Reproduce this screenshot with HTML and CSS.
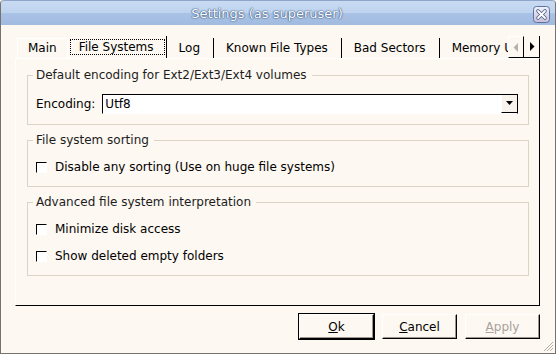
FILE: index.html
```html
<!DOCTYPE html>
<html lang="en">
<head>
    <meta charset="UTF-8">
    <title>Settings (as superuser)</title>
    <link rel="stylesheet" href="styles.css">
</head>
<body>
    <div class="window">
        <div class="titlebar">
            <span class="title">Settings (as superuser)</span>
            <span class="close">
                <svg width="17" height="17" viewBox="0 0 17 17">
                    <defs>
                        <linearGradient id="cg" x1="0" y1="0" x2="0" y2="1">
                            <stop offset="0" stop-color="#eef2fa"/>
                            <stop offset="1" stop-color="#c9bdd9"/>
                        </linearGradient>
                    </defs>
                    <rect x="0.5" y="0.5" width="16" height="16" rx="3" fill="url(#cg)" stroke="#5d74a0"/>
                    <path d="M5 5 L12 12 M12 5 L5 12" stroke="#52688f" stroke-width="3.6" stroke-linecap="round"/>
                    <path d="M5 5 L12 12 M12 5 L5 12" stroke="#ffffff" stroke-width="1.8" stroke-linecap="round"/>
                </svg>
            </span>
        </div>

        <div class="content">
            <!-- onglets -->
            <div class="tabbar">
                <div class="tabs">
                    <div class="tab tab-first">Main</div>
                    <div class="tab tab-current"><span class="focus">File Systems</span></div>
                    <div class="tab">Log</div>
                    <div class="tab">Known File Types</div>
                    <div class="tab">Bad Sectors</div>
                    <div class="tab">Memory Usage</div>
                </div>
                <div class="scroller">
                    <span class="scroll-btn">
                        <svg width="6" height="9" viewBox="0 0 6 9"><path d="M5 0 L5 9 L0.5 4.5 Z" fill="#b7b2ab"/></svg>
                    </span>
                    <span class="scroll-btn">
                        <svg width="6" height="9" viewBox="0 0 6 9"><path d="M1 0 L1 9 L5.5 4.5 Z" fill="#000"/></svg>
                    </span>
                </div>
            </div>

            <div class="panel">
                <fieldset class="group group-encoding">
                    <legend>Default encoding for Ext2/Ext3/Ext4 volumes</legend>
                    <div class="row">
                        <label class="field-label">Encoding:</label>
                        <div class="combo">
                            <span class="combo-text">Utf8</span>
                            <span class="combo-btn">
                                <svg width="7" height="5" viewBox="0 0 7 5"><path d="M0 0 L7 0 L3.5 4 Z" fill="#000"/></svg>
                            </span>
                        </div>
                    </div>
                </fieldset>

                <fieldset class="group">
                    <legend>File system sorting</legend>
                    <div class="row">
                        <span class="check"></span>
                        <span>Disable any sorting (Use on huge file systems)</span>
                    </div>
                </fieldset>

                <fieldset class="group">
                    <legend>Advanced file system interpretation</legend>
                    <div class="row">
                        <span class="check"></span>
                        <span>Minimize disk access</span>
                    </div>
                    <div class="row">
                        <span class="check"></span>
                        <span>Show deleted empty folders</span>
                    </div>
                </fieldset>
            </div>

            <div class="buttons">
                <button class="btn btn-default"><u>O</u>k</button>
                <button class="btn"><u>C</u>ancel</button>
                <button class="btn btn-disabled"><u>A</u>pply</button>
            </div>
        </div>

        <svg class="grip" width="12" height="12" viewBox="0 0 12 12">
            <path d="M11 2 L2 11 M11 5 L5 11 M11 8 L8 11" stroke="#b3aea7" stroke-width="1"/>
        </svg>
    </div>
</body>
</html>
```

FILE: styles.css
```css
body {
    margin: 0;
    font-family: "DejaVu Sans", sans-serif;
    font-size: 12px;
    color: #000;
    background: #fdf8f2;
}
.window {
    position: relative;
    width: 556px;
    height: 354px;
    box-sizing: border-box;
    border: 1px solid #77726c;
    border-top: none;
    border-radius: 4px 4px 0 0;
    background: #fdf8f2;
    overflow: hidden;
}
.titlebar {
    display: flex;
    align-items: center;
    height: 24px;
    margin: 0 -1px;
    border: 1px solid #8ea6c9;
    border-bottom: none;
    border-radius: 4px 4px 0 0;
    background: linear-gradient(#c9dbf2 0, #bed3ef 50%, #a9c2e5 50%, #a1bbe0 100%);
}
.title {
    flex: 1;
    text-align: center;
    font-size: 13px;
    color: #ffffff;
    text-shadow: 0 0 1px #2f4d7a, 0 0 1px #2f4d7a, 0 0 2px #5a7aa8;
}
.close {
    display: flex;
    margin-right: 5px;
    margin-top: 2px;
}
.content {
    padding: 11px 15px 0 14px;
}

/* onglets */
.tabbar {
    display: flex;
    height: 22px;
}
.tabs {
    flex: 1;
    display: flex;
    align-items: flex-end;
    overflow: hidden;
    white-space: nowrap;
}
.tab {
    height: 20px;
    line-height: 20px;
    padding: 0 13px 0 12px;
    border-right: 1px solid #000;
    box-sizing: border-box;
}
.tab:last-child {
    border-right: none;
    padding-right: 0;
}
.tab-first {
    margin-left: 2px;
    padding: 0 10px;
    border: 1px solid #fff;
    border-bottom: none;
    line-height: 19px;
}
.tab-current {
    height: 22px;
    padding: 0 1px 2px 2px;
    display: flex;
    align-items: center;
}
.focus {
    display: block;
    height: 16px;
    line-height: 15px;
    padding: 0 10px 0 8px;
    border: 1px dotted #000;
    box-sizing: border-box;
    margin-top: 2px;
}
.scroller {
    display: flex;
}
.scroll-btn {
    display: flex;
    align-items: center;
    justify-content: center;
    width: 16px;
    box-sizing: border-box;
    border-right: 1px solid #000;
    border-bottom: 1px solid #000;
}
.scroll-btn:first-child {
    border-left: 1px solid #fff;
    border-top: 1px solid #fff;
}

/* panneau */
.panel {
    height: 248px;
    box-sizing: border-box;
    border: 1px solid;
    border-color: #fff #000 #000 #fff;
    padding: 9px 10px 0 11px;
    display: flex;
    flex-direction: column;
    gap: 8px;
}
.group {
    margin: 0;
    padding: 0 10px 10px 8px;
    border: 1px solid #ddd4c6;
    min-width: 0;
}
.group legend {
    padding: 0 5px 0 3px;
    margin-left: -3px;
    line-height: 14px;
    color: #1c1c1c;
}
.group-encoding .row {
    height: 20px;
    margin-top: 12px;
}
.row {
    display: flex;
    align-items: center;
    height: 18px;
    margin-top: 11px;
}
.row + .row {
    margin-top: 9px;
}
.field-label {
    margin-right: 7px;
}
.combo {
    flex: 1;
    display: flex;
    height: 20px;
    box-sizing: border-box;
    border: 1px solid;
    border-color: #000 #000 #fff #000;
    background: #fff;
}
.combo-text {
    flex: 1;
    padding-left: 2px;
    line-height: 18px;
}
.combo-btn {
    display: flex;
    align-items: center;
    justify-content: center;
    width: 16px;
    box-sizing: border-box;
    background: #f8f3ec;
    border-left: 1px solid #fff;
    border-bottom: 1px solid #000;
}
.check {
    width: 11px;
    height: 11px;
    box-sizing: border-box;
    border: 1px solid;
    border-color: #000 #fff #fff #000;
    background: #fff;
    margin-right: 8px;
}

/* boutons */
.buttons {
    display: flex;
    justify-content: flex-end;
    gap: 8px;
    margin-top: 8px;
}
.btn {
    width: 75px;
    height: 25px;
    padding: 0;
    font-family: "DejaVu Sans", sans-serif;
    font-size: 12px;
    color: #000;
    background: #fdf8f2;
    border: 1px solid;
    border-color: #fff #000 #000 #fff;
    box-shadow: inset -1px -1px 0 #9c968f;
}
.btn-default {
    outline: 1px solid #000;
}
.btn-disabled {
    color: #a7a29b;
}
.grip {
    position: absolute;
    right: 1px;
    bottom: 1px;
}
```
